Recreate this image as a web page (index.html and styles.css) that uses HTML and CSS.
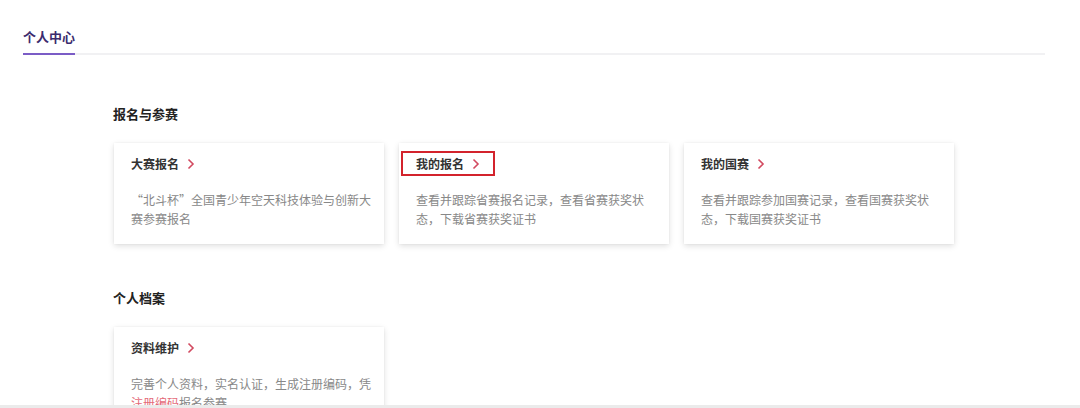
FILE: index.html
```html
<!DOCTYPE html>
<html lang="zh-CN">
<head>
<meta charset="utf-8">
<title>个人中心</title>
<link rel="stylesheet" href="styles.css">
</head>
<body>
<div class="tabs">
  <div class="tab active">个人中心</div>
</div>
<main class="content">
  <section class="section">
    <h2 class="section-title">报名与参赛</h2>
    <div class="cards">
      <div class="card">
        <div class="card-title"><span>大赛报名</span><svg class="arrow" viewBox="0 0 8 12" width="8" height="12"><path d="M1.5 1.5 L6 6 L1.5 10.5" fill="none" stroke="#d24a60" stroke-width="1.6"/></svg></div>
        <p class="card-desc">“北斗杯”全国青少年空天科技体验与创新大赛参赛报名</p>
      </div>
      <div class="card">
        <div class="card-title highlighted"><span>我的报名</span><svg class="arrow" viewBox="0 0 8 12" width="8" height="12"><path d="M1.5 1.5 L6 6 L1.5 10.5" fill="none" stroke="#d24a60" stroke-width="1.6"/></svg><i class="mark"></i></div>
        <p class="card-desc">查看并跟踪省赛报名记录，查看省赛获奖状态，下载省赛获奖证书</p>
      </div>
      <div class="card">
        <div class="card-title"><span>我的国赛</span><svg class="arrow" viewBox="0 0 8 12" width="8" height="12"><path d="M1.5 1.5 L6 6 L1.5 10.5" fill="none" stroke="#d24a60" stroke-width="1.6"/></svg></div>
        <p class="card-desc">查看并跟踪参加国赛记录，查看国赛获奖状态，下载国赛获奖证书</p>
      </div>
    </div>
  </section>
  <section class="section second">
    <h2 class="section-title">个人档案</h2>
    <div class="cards">
      <div class="card">
        <div class="card-title"><span>资料维护</span><svg class="arrow" viewBox="0 0 8 12" width="8" height="12"><path d="M1.5 1.5 L6 6 L1.5 10.5" fill="none" stroke="#d24a60" stroke-width="1.6"/></svg></div>
        <p class="card-desc">完善个人资料，实名认证，生成注册编码，凭<span class="link">注册编码</span>报名参赛</p>
      </div>
    </div>
  </section>
</main>
<div class="bottom-bar"></div>
</body>
</html>
```
FILE: styles.css
```css
* { box-sizing: border-box; }
html, body { margin: 0; padding: 0; background: #fff; }
body {
  font-family: "Noto Sans CJK SC", "Noto Sans", sans-serif;
  color: #333;
  overflow: hidden;
  height: 408px;
}
.tabs {
  display: flex;
  margin: 0 35px 0 23px;
  padding-top: 25px;
  border-bottom: 2px solid #f1f1f3;
}
.tab {
  font-size: 13px;
  font-weight: 700;
  line-height: 24px;
  padding-bottom: 4px;
  margin-bottom: -2px;
  color: #3b2b6e;
  border-bottom: 2px solid #7b5cc6;
}
.content { padding-left: 113px; padding-top: 49px; }
.section-title {
  margin: 0;
  font-size: 13px;
  line-height: 20px;
  font-weight: 700;
  color: #222;
}
.section.second { margin-top: 44px; }
.cards {
  display: flex;
  gap: 15px;
  margin-top: 19px;
  margin-left: 1px;
}
.card {
  width: 270px;
  height: 101px;
  padding: 11px 13px 16px 17px;
  background: #fff;
  box-shadow: 0 2px 6px rgba(0,0,0,0.13), 0 0 2px rgba(0,0,0,0.05);
}
.card-title {
  position: relative;
  display: flex;
  align-items: center;
  gap: 8px;
  font-size: 12px;
  line-height: 20px;
  font-weight: 700;
  color: #333;
}
.arrow { display: block; }
.mark {
  position: absolute;
  left: -15px;
  top: -3px;
  width: 94px;
  height: 25px;
  border: 2px solid #d3232c;
}
.card-desc {
  margin: 16px 0 0;
  font-size: 12px;
  line-height: 19px;
  color: #888;
}
.link { color: #e46a78; }
.bottom-bar {
  position: fixed;
  left: 0;
  right: 0;
  bottom: 0;
  height: 3px;
  background: #ebebeb;
}
```
